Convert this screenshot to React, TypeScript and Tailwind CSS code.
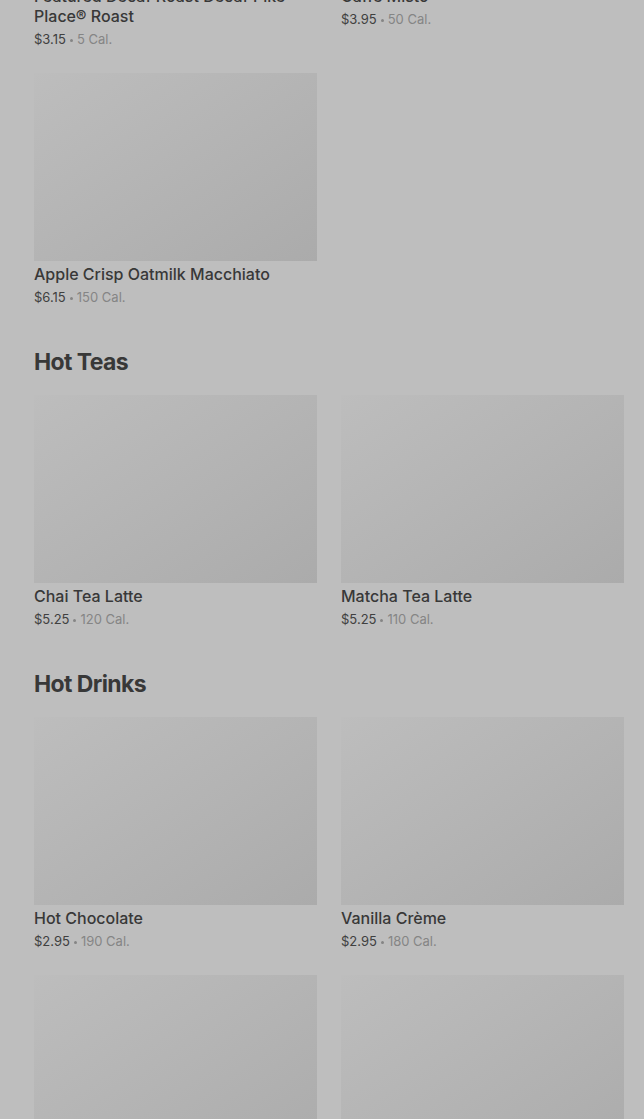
import React from "react";

type Item = { name: string; price: string; cal: string };

const Card = ({ item }: { item: Item }) => (
  <div className="flex flex-col">
    <div className="h-[188px] w-full bg-gradient-to-br from-[#bdbdbd] via-[#b4b4b4] to-[#ababab]" />
    <div className="mt-[3px] text-[16px] leading-[20px] font-medium text-[#383838]">{item.name}</div>
    <div className="mt-[3px] h-[20px] text-[13px] leading-[20px] text-[#404040]">
      {item.price}
      <span className="mx-[4px] inline-block h-[3px] w-[3px] rounded-full bg-[#858585] align-middle" />
      <span className="text-[#858585]">{item.cal}</span>
    </div>
  </div>
);

const Grid = ({ items }: { items: Item[] }) => (
  <div className="grid grid-cols-2 gap-x-[24px] gap-y-[24px]">
    {items.map((it, i) => (
      <Card key={i} item={it} />
    ))}
  </div>
);

const Heading = ({ children }: { children: React.ReactNode }) => (
  <h2 className="pt-[39px] pb-[17px] text-[23px] leading-[32px] font-bold tracking-[-0.6px] text-[#383838]">
    {children}
  </h2>
);

export default function App() {
  return (
    <div
      className="h-[1119px] w-[644px] overflow-hidden bg-[#bebebe]"
      style={{ fontFamily: "Inter, 'Noto Sans', sans-serif" }}
    >
      <div className="-mt-[205px] pl-[34px] pr-[20px]">
        <Grid
          items={[
            { name: "Featured Decaf Roast Decaf Pike Place® Roast", price: "$3.15", cal: "5 Cal." },
            { name: "Caffè Misto", price: "$3.95", cal: "50 Cal." },
            { name: "Apple Crisp Oatmilk Macchiato", price: "$6.15", cal: "150 Cal." },
          ]}
        />
        <Heading>Hot Teas</Heading>
        <Grid
          items={[
            { name: "Chai Tea Latte", price: "$5.25", cal: "120 Cal." },
            { name: "Matcha Tea Latte", price: "$5.25", cal: "110 Cal." },
          ]}
        />
        <Heading>Hot Drinks</Heading>
        <Grid
          items={[
            { name: "Hot Chocolate", price: "$2.95", cal: "190 Cal." },
            { name: "Vanilla Crème", price: "$2.95", cal: "180 Cal." },
            { name: "Steamed Milk", price: "$2.45", cal: "190 Cal." },
            { name: "Caramel Apple Spice", price: "$4.25", cal: "380 Cal." },
          ]}
        />
      </div>
    </div>
  );
}
